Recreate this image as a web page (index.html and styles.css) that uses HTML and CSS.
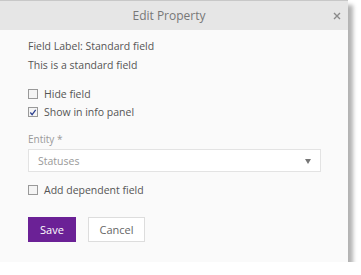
FILE: index.html
```html
<!DOCTYPE html>
<html lang="en">
<head>
  <meta charset="UTF-8">
  <title>Edit Property</title>
  <link rel="stylesheet" href="styles.css">
</head>
<body>
  <div class="dialog">
    <div class="dialog-header">
      <h3 class="dialog-title">Edit Property</h3>
      <svg class="close" width="8" height="8" viewBox="0 0 8 8"><path d="M1 1 L7 7 M7 1 L1 7" stroke="#8a8a8a" stroke-width="1.4"/></svg>
    </div>

    <div class="dialog-body">
      <p class="info">Field Label: Standard field</p>
      <p class="info">This is a standard field</p>

      <div class="checks">
        <label class="check"><span class="box"></span>Hide field</label>
        <label class="check"><span class="box checked">
          <svg width="9" height="9" viewBox="0 0 9 9"><path d="M1.5 4.5 L3.5 7 L7.5 1.5" fill="none" stroke="#2b3f8f" stroke-width="1.4"/></svg>
        </span>Show in info panel</label>
      </div>

      <div class="form-group">
        <div class="field-label">Entity *</div>
        <div class="select">
          <span>Statuses</span>
          <span class="arrow"></span>
        </div>
      </div>

      <label class="check"><span class="box"></span>Add dependent field</label>

      <div class="actions">
        <button class="btn btn-primary">Save</button>
        <button class="btn btn-default">Cancel</button>
      </div>
    </div>
  </div>
</body>
</html>
```

FILE: styles.css
```css
* {
  margin: 0;
  padding: 0;
  box-sizing: border-box;
}

body {
  font-family: 'Open Sans', 'Noto Sans', sans-serif;
  background: #fff;
  color: #555;
}

.dialog {
  width: 348px;
  height: 262px;
  background: #fafafa;
  border-top: 1px solid #c8c8c8;
  box-shadow: 5px 5px 4px rgba(0, 0, 0, 0.3);
}

.dialog-header {
  height: 29px;
  background: #e6e6e6;
  display: flex;
  align-items: center;
  justify-content: center;
  position: relative;
}

.dialog-title {
  font-size: 12px;
  font-weight: 400;
  color: #777;
  margin-left: -10px;
}

.close {
  position: absolute;
  right: 7px;
  top: 11px;
}

.dialog-body {
  padding: 7px 28px 0;
}

.info {
  font-size: 10.5px;
  line-height: 19px;
  color: #555;
}

.checks {
  margin-top: 10px;
  display: flex;
  flex-direction: column;
}

.check {
  display: flex;
  align-items: center;
  font-size: 10.5px;
  line-height: 18px;
  color: #555;
}

.box {
  width: 10px;
  height: 10px;
  border: 1px solid #999;
  background: #f4f4f4;
  margin-right: 6px;
  display: inline-flex;
  align-items: center;
  justify-content: center;
}

.box svg {
  display: block;
}

.form-group {
  margin-top: 11px;
  margin-bottom: 9px;
}

.field-label {
  font-size: 10px;
  color: #999;
  line-height: 14px;
  margin-bottom: 3px;
}

.select {
  width: 293px;
  height: 23px;
  background: #fff;
  border: 1px solid #e3e3e3;
  display: flex;
  align-items: center;
  justify-content: space-between;
  padding: 0 9px;
  font-size: 10.5px;
  color: #999;
}

.arrow {
  width: 0;
  height: 0;
  border-left: 3px solid transparent;
  border-right: 3px solid transparent;
  border-top: 5px solid #777;
  margin-top: 2px;
}

.actions {
  display: flex;
  gap: 12px;
  margin-top: 18px;
}

.btn {
  height: 25px;
  font-family: inherit;
  font-size: 11px;
  border: 1px solid #ddd;
  cursor: pointer;
}

.btn-primary {
  width: 48px;
  background: #6b2196;
  border-color: #6b2196;
  color: #fff;
}

.btn-default {
  width: 57px;
  background: #fff;
  color: #666;
}
```
